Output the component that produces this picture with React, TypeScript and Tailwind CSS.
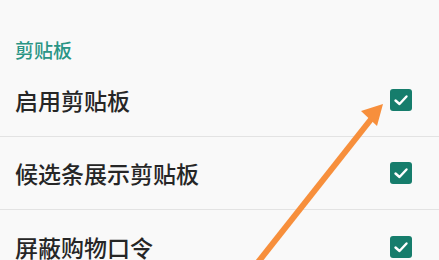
import React from "react";

const rows = ["启用剪贴板", "候选条展示剪贴板", "屏蔽购物口令"];

function Check() {
  return (
    <div className="w-[22px] h-[22px] rounded-[3px] bg-[#167d6c] flex items-center justify-center">
      <svg width="22" height="22" viewBox="0 0 22 22">
        <polyline points="5.5,11.5 9.5,15 16.5,7.5" fill="none" stroke="#ffffff" strokeWidth="2.4" strokeLinecap="round" strokeLinejoin="round" />
      </svg>
    </div>
  );
}

export default function App() {
  return (
    <div
      className="relative w-[439px] h-[260px] overflow-hidden bg-[#f9f9f9]"
      style={{ fontFamily: '"Noto Sans CJK SC", "Noto Sans", sans-serif' }}
    >
      <div className="pt-[38px] pl-[15px] h-[64px]">
        <div className="text-[19px] leading-[24px] text-[#2a9585] font-medium">剪贴板</div>
      </div>
      {rows.map((r, i) => (
        <div
          key={r}
          className={`h-[73px] flex items-center justify-between pl-[15px] pr-[27px] ${i < 2 ? "border-b border-[#e3e3e3]" : ""}`}
        >
          <span className="text-[23px] leading-[30px] text-[#262626] font-medium">{r}</span>
          <Check />
        </div>
      ))}
      <svg className="absolute left-0 top-0 pointer-events-none" width="439" height="260" viewBox="0 0 439 260">
        <line x1="255" y1="266" x2="372" y2="118" stroke="#f78f3c" strokeWidth="6" strokeLinecap="butt" />
        <polygon points="383,104 361,111 377,126" fill="#f78f3c" />
      </svg>
    </div>
  );
}
